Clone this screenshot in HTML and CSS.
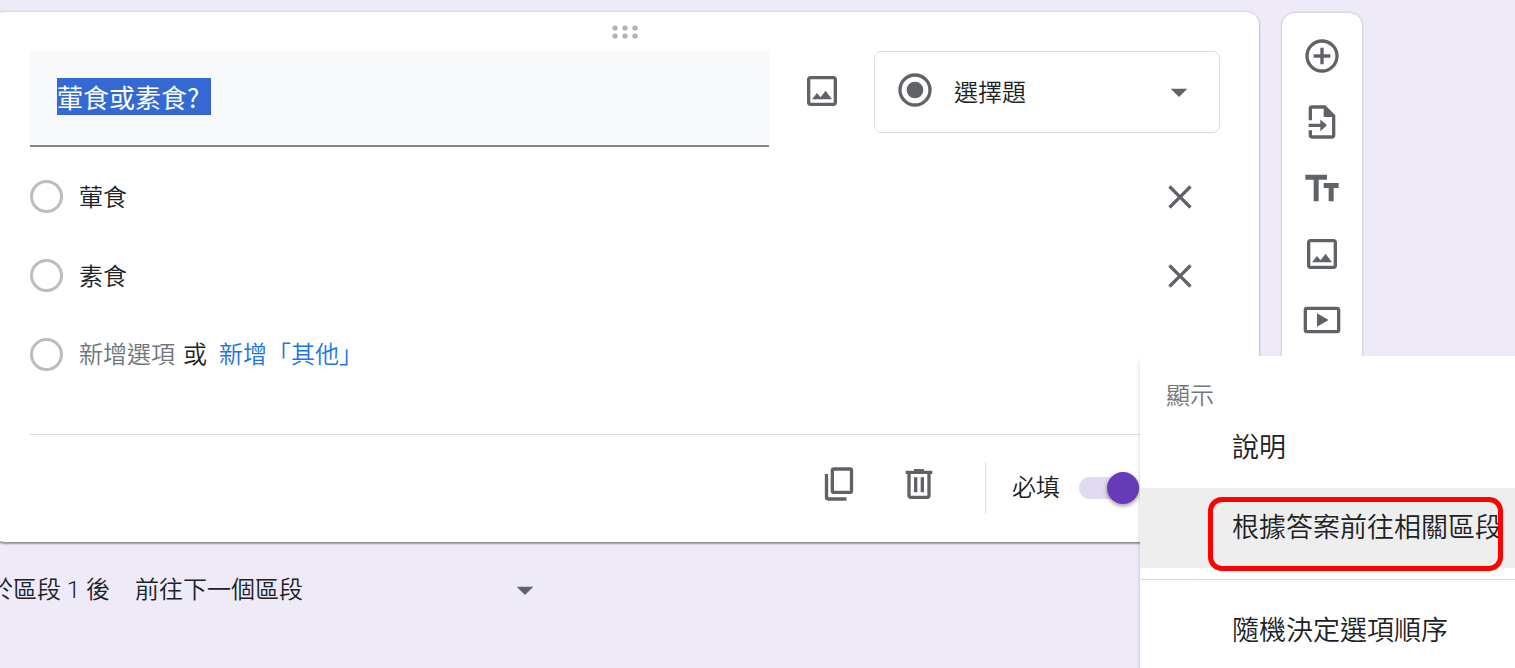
FILE: index.html
```html
<!DOCTYPE html>
<html lang="zh-Hant">
<head>
<meta charset="utf-8">
<meta name="viewport" content="width=device-width, initial-scale=1">
<title>表單編輯器</title>
<link rel="stylesheet" href="styles.css">
</head>
<body>
<main class="editor">
  <section class="card">
    <div class="drag">
      <svg class="dots" viewBox="0 0 26 14" aria-hidden="true"><circle cx="3" cy="3" r="2.600"/><circle cx="13" cy="3" r="2.600"/><circle cx="23" cy="3" r="2.600"/><circle cx="3" cy="11" r="2.600"/><circle cx="13" cy="11" r="2.600"/><circle cx="23" cy="11" r="2.600"/></svg>
    </div>
    <div class="question">
      <div class="title-field">
        <input id="title" class="title-input" type="text" aria-label="問題" value="葷食或素食?  " spellcheck="false">
      </div>
      <button class="icon-button" type="button" aria-label="新增圖片"><svg class="icon" viewBox="0 0 24 24"><path d="M19 5v14H5V5h14m0-2H5c-1.100 0-2 .9-2 2v14c0 1.100.9 2 2 2h14c1.100 0 2-.9 2-2V5c0-1.100-.9-2-2-2zm-4.860 8.860l-3 3.870L9 13.140 6 17h12l-3.860-5.140z"/></svg></button>
      <div class="type-field">
        <svg class="icon type-icon" viewBox="0 0 24 24" aria-hidden="true"><path d="M12 7a5 5 0 1 0 0 10 5 5 0 0 0 0-10zm0-5a10 10 0 1 0 0 20 10 10 0 0 0 0-20zm0 18a8 8 0 1 1 0-16 8 8 0 0 1 0 16z"/></svg>
        <select class="type-select" aria-label="題型"><option>選擇題</option></select>
        <svg class="icon arrow" viewBox="0 0 24 24" aria-hidden="true"><path d="M7 10l5 5 5-5z"/></svg>
      </div>
    </div>
    <div class="options">
      <div class="option">
        <input class="radio" type="radio" name="answer" aria-label="葷食">
        <input class="option-input" type="text" aria-label="選項 1" value="葷食">
        <button class="icon-button" type="button" aria-label="移除選項 1"><svg class="icon" viewBox="0 0 24 24"><path d="M19 6.410L17.590 5 12 10.590 6.410 5 5 6.410 10.590 12 5 17.590 6.410 19 12 13.410 17.590 19 19 17.590 13.410 12z"/></svg></button>
      </div>
      <div class="option">
        <input class="radio" type="radio" name="answer" aria-label="素食">
        <input class="option-input" type="text" aria-label="選項 2" value="素食">
        <button class="icon-button" type="button" aria-label="移除選項 2"><svg class="icon" viewBox="0 0 24 24"><path d="M19 6.410L17.590 5 12 10.590 6.410 5 5 6.410 10.590 12 5 17.590 6.410 19 12 13.410 17.590 19 19 17.590 13.410 12z"/></svg></button>
      </div>
      <div class="option">
        <input class="radio" type="radio" name="answer" aria-label="新增選項">
        <div class="add-line">
          <button class="add-option" type="button">新增選項</button>
          <span>或</span>
          <button class="add-other" type="button">新增「其他」</button>
        </div>
      </div>
    </div>
    <footer class="actions">
      <div class="tools">
        <button class="icon-button" type="button" aria-label="複製"><svg class="icon" viewBox="0 0 24 24"><path d="M18.500 2H9a2 2 0 0 0-2 2v12a2 2 0 0 0 2 2h9.500a2 2 0 0 0 2-2V4a2 2 0 0 0-2-2zm0 14H9V4h9.500v12zM3.500 6v14a2 2 0 0 0 2 2H16.500v-2H5.500V6z"/></svg></button>
        <button class="icon-button" type="button" aria-label="刪除"><svg class="icon" viewBox="0 0 24 24"><path d="M15 4V3H9v1H4v2h1v13c0 1.100.9 2 2 2h10c1.100 0 2-.9 2-2V6h1V4h-5zm2 15H7V6h10v13zM9 8h2v9H9zm4 0h2v9h-2z"/></svg></button>
      </div>
      <label class="required"><span>必填</span><input class="toggle" type="checkbox" role="switch" checked></label>
    </footer>
  </section>

  <nav class="rail" aria-label="工具列">
    <button class="icon-button" type="button" aria-label="新增問題"><svg class="icon" viewBox="0 0 24 24"><path d="M13 7h-2v4H7v2h4v4h2v-4h4v-2h-4V7zm-1-5a10 10 0 1 0 0 20 10 10 0 0 0 0-20zm0 18a8 8 0 1 1 0-16 8 8 0 0 1 0 16z"/></svg></button>
    <button class="icon-button" type="button" aria-label="匯入問題"><svg class="icon" viewBox="0 0 24 24"><path d="M14 2H6a2 2 0 0 0-2 2v7h2V4h7v5h5v11H6v-3H4v3a2 2 0 0 0 2 2h12a2 2 0 0 0 2-2V8zM4 13v2h7v2.500l4-3.500-4-3.500V13z"/></svg></button>
    <button class="icon-button" type="button" aria-label="新增標題與說明"><svg class="icon" viewBox="0 0 24 24"><path d="M2 4v3h5v13h3V7h5V4zM13 9v3h3v8h3v-8h3V9z"/></svg></button>
    <button class="icon-button" type="button" aria-label="新增圖片"><svg class="icon" viewBox="0 0 24 24"><path d="M19 5v14H5V5h14m0-2H5c-1.100 0-2 .9-2 2v14c0 1.100.9 2 2 2h14c1.100 0 2-.9 2-2V5c0-1.100-.9-2-2-2zm-4.860 8.860l-3 3.870L9 13.140 6 17h12l-3.860-5.140z"/></svg></button>
    <button class="icon-button" type="button" aria-label="新增影片"><svg class="icon" viewBox="0 0 24 24"><path d="M21 4H3a2 2 0 0 0-2 2v12a2 2 0 0 0 2 2h18a2 2 0 0 0 2-2V6a2 2 0 0 0-2-2zm0 14H3V6h18v12zM9 8v8l7-4z"/></svg></button>
  </nav>

  <div class="after">
    <label for="next">於區段 1 後</label>
    <div class="next-field">
      <select id="next" class="next-select"><option>前往下一個區段</option></select>
      <svg class="icon arrow" viewBox="0 0 24 24" aria-hidden="true"><path d="M7 10l5 5 5-5z"/></svg>
    </div>
  </div>
</main>

<div class="menu" role="menu" aria-label="更多選項">
  <div class="menu-heading">顯示</div>
  <button class="menu-item" type="button" role="menuitem">說明</button>
  <button class="menu-item active" type="button" role="menuitem">根據答案前往相關區段</button>
  <hr class="menu-rule">
  <button class="menu-item" type="button" role="menuitem">隨機決定選項順序</button>
  <div class="callout"></div>
</div>
<script src="editor.js"></script>
</body>
</html>
```
FILE: styles.css
```css
* { box-sizing: border-box; }

body {
  margin: 0;
  position: relative;
  min-height: 100vh;
  overflow: hidden;
  background: #eeeaf8;
  color: #202124;
  font-family: Roboto, "Noto Sans CJK TC", sans-serif;
  font-size: 24px;
  font-weight: 350;
  line-height: 32px;
}

button, input, select {
  margin: 0;
  padding: 0;
  border: 0;
  background: none;
  color: inherit;
  font: inherit;
  outline: none;
}

.icon {
  display: block;
  width: 40px;
  height: 40px;
  fill: #5f6368;
}

.icon-button {
  display: grid;
  place-items: center;
  width: 40px;
  height: 40px;
}

.editor {
  display: grid;
  grid-template-columns: minmax(0, 1fr) 80px;
  column-gap: 23px;
  align-items: start;
  padding: 12px 153px 0 0;
}

.card {
  margin-left: -8px;
  padding: 0 39px 0 38px;
  border-radius: 13px;
  background: #fff;
  box-shadow: 0 2px 2px rgba(0, 0, 0, .34), 0 0 2px 1px rgba(0, 0, 0, .1);
}

.drag {
  display: grid;
  place-items: center;
  height: 39px;
}

.dots {
  width: 26px;
  height: 14px;
  fill: #b0b0b0;
}

.question {
  display: flex;
  align-items: flex-start;
}

.title-field {
  flex: 1;
  padding-bottom: 1px;
  border-bottom: 2px solid #80868b;
}

.title-input {
  display: block;
  width: 100%;
  height: 93px;
  padding: 25px 27px 27px;
  background: #f8f9fa;
  font-family: "Noto Sans CJK TC", sans-serif;
  font-size: 26px;
  font-weight: 400;
  line-height: 40px;
}

.title-input::selection {
  background: rgba(51, 103, 209, .99);
  color: #fff;
}

.question > .icon-button {
  margin: 20px 32px 0 33px;
}

.type-field {
  position: relative;
  width: 346px;
}

.type-select {
  appearance: none;
  display: block;
  width: 100%;
  height: 82px;
  padding: 1px 80px 0 79px;
  border: 1px solid #dadce0;
  border-radius: 7px;
}

.type-icon {
  position: absolute;
  left: 21px;
  top: 19px;
}

.arrow {
  position: absolute;
  right: 21px;
  top: 50%;
  margin-top: -20px;
  pointer-events: none;
}

.options { padding-top: 10px; }

.option {
  display: flex;
  align-items: center;
  height: 79px;
  padding-right: 20px;
}

.radio {
  appearance: none;
  width: 33px;
  height: 33px;
  margin-right: 16px;
  border: 3px solid #bdbdbd;
  border-radius: 50%;
}

.option-input {
  flex: 1;
  min-width: 0;
  padding-top: 2px;
}

.add-line {
  display: flex;
}

.add-line span { margin: 0 12px 0 8px; }
.add-option { color: #70757a; }
.add-other { color: #1a73e8; }

.actions {
  display: flex;
  justify-content: flex-end;
  align-items: center;
  height: 108px;
  margin-top: 40px;
  padding: 0 81px 2px 0;
  border-top: 1px solid #dadce0;
}

.tools {
  display: flex;
  gap: 40px;
  padding: 0 46px 8px 0;
}

.required {
  display: flex;
  align-items: center;
  gap: 19px;
  height: 52px;
  padding-left: 26px;
  border-left: 1px solid #dadce0;
}

.toggle {
  appearance: none;
  display: flex;
  align-items: center;
  justify-content: flex-end;
  width: 60px;
  height: 22px;
  border-radius: 11px;
  background: #e1d8f1;
}

.toggle::after {
  content: "";
  width: 32px;
  height: 32px;
  border-radius: 50%;
  background: #673ab7;
  box-shadow: 0 2px 4px rgba(0, 0, 0, .4);
}

.rail {
  display: grid;
  justify-items: center;
  row-gap: 26px;
  margin-top: 1px;
  padding: 23px 0 89px;
  border-radius: 13px;
  background: #fff;
  box-shadow: 0 0 2px 1px rgba(0, 0, 0, .12);
}

.after {
  grid-column: 1 / -1;
  display: flex;
  align-items: center;
  gap: 25px;
  margin: 32px 0 0 -11px;
}

.after label { white-space: nowrap; }

.next-field {
  position: relative;
  width: 431px;
}

.next-select {
  appearance: none;
  display: block;
  width: 100%;
  height: 32px;
}

.menu {
  position: absolute;
  top: 356px;
  right: 0;
  width: 375px;
  padding: 24px 0 14px;
  border-top-left-radius: 6px;
  background: #fff;
  box-shadow: 0 3px 4px rgba(0, 0, 0, .2);
}

.menu-heading {
  height: 28px;
  padding-left: 26px;
  color: #757575;
}

.menu-item {
  display: block;
  width: 100%;
  height: 80px;
  padding-left: 92px;
  font-size: 27px;
  text-align: left;
  white-space: nowrap;
}

.menu-item.active { background: #eee; }

.menu-rule {
  margin: 11px 0;
  border: 0;
  border-top: 1px solid #dadce0;
}

.callout {
  position: absolute;
  left: 68px;
  top: 141px;
  width: 295px;
  height: 74px;
  border: 5px solid #f00;
  border-radius: 14px;
  pointer-events: none;
}
```
FILE: editor.js
```js
const title = document.getElementById("title");
title.focus();
title.select();
```
